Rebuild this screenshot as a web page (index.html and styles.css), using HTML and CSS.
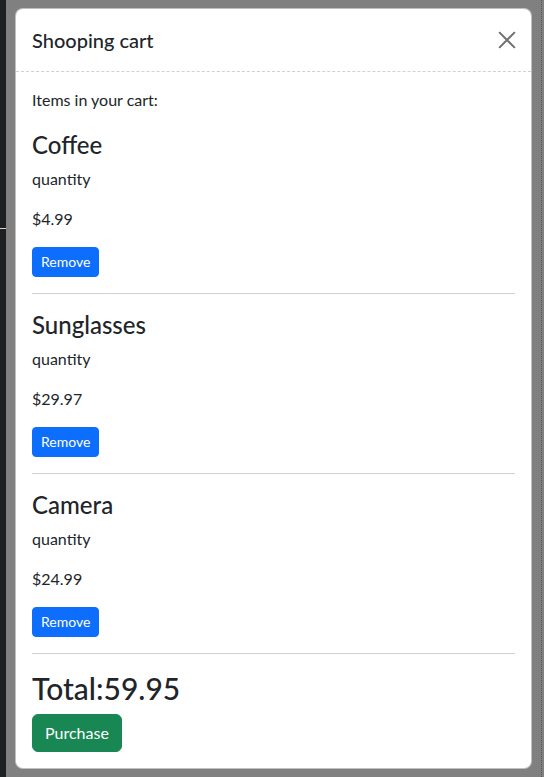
FILE: index.html
```html
<!DOCTYPE html>
<html lang="en">
<head>
<meta charset="utf-8">
<title>Shooping cart</title>
<link rel="stylesheet" href="styles.css">
</head>
<body>
<div class="backdrop">
  <div class="strip"><span class="strip-line"></span></div>
  <div class="dialog-area">
    <div class="modal">
      <div class="modal-header">
        <h5 class="modal-title">Shooping cart</h5>
        <button class="btn-close" aria-label="Close">
          <svg viewBox="0 0 16 16" width="18" height="18"><path d="M1 1 L15 15 M15 1 L1 15" stroke="#707070" stroke-width="1.8" fill="none"/></svg>
        </button>
      </div>
      <div class="modal-body">
        <p class="intro">Items in your cart:</p>
        <div class="item">
          <h3 class="item-name">Coffee</h3>
          <p class="item-qty">quantity</p>
          <p class="item-price">$4.99</p>
          <div><button class="btn btn-primary btn-sm">Remove</button></div>
          <hr class="divider">
        </div>
        <div class="item">
          <h3 class="item-name">Sunglasses</h3>
          <p class="item-qty">quantity</p>
          <p class="item-price">$29.97</p>
          <div><button class="btn btn-primary btn-sm">Remove</button></div>
          <hr class="divider">
        </div>
        <div class="item">
          <h3 class="item-name">Camera</h3>
          <p class="item-qty">quantity</p>
          <p class="item-price">$24.99</p>
          <div><button class="btn btn-primary btn-sm">Remove</button></div>
          <hr class="divider">
        </div>
        <h1 class="total">Total:59.95</h1>
        <button class="btn btn-success">Purchase</button>
      </div>
    </div>
  </div>
  <div class="right-gutter"></div>
</div>
</body>
</html>
```

FILE: styles.css
```css
* { box-sizing: border-box; }
html, body { margin: 0; padding: 0; }
body {
  width: 544px;
  height: 777px;
  overflow: hidden;
  background: #808080;
  font-family: Lato, "Open Sans", sans-serif;
  color: #212529;
}
.backdrop {
  display: flex;
  height: 777px;
}
.strip {
  width: 6px;
  flex: none;
  background: #1e1f21;
  position: relative;
}
.strip-line {
  position: absolute;
  left: 0;
  top: 228px;
  width: 6px;
  height: 1px;
  background: #d8d8d8;
}
.dialog-area {
  flex: none;
  width: 535px;
  padding: 8px 0 0 9px;
}
.right-gutter {
  flex: none;
  width: 3px;
  border-left: 1px dotted #555;
}
.modal {
  width: 517px;
  background: #fff;
  border: 1px solid rgba(0,0,0,0.25);
  border-radius: 8px;
}
.modal-header {
  display: flex;
  align-items: center;
  justify-content: space-between;
  padding: 16px 14px 16px 16px;
  border-bottom: 1px dashed #cfd2d4;
}
.modal-title {
  margin: 0;
  font-size: 20px;
  font-weight: 500;
  line-height: 30px;
}
.btn-close {
  border: 0;
  background: transparent;
  padding: 0;
  width: 20px;
  height: 20px;
  display: flex;
  align-items: center;
  justify-content: center;
}
.modal-body {
  padding: 16px;
}
p { margin: 0 0 16px; font-size: 16px; line-height: 24px; }
.intro { margin-bottom: 18px; }
.item-name {
  margin: 0 0 8px;
  font-size: 24px;
  font-weight: 500;
  line-height: 29px;
}
.divider {
  border: 0;
  border-top: 1px solid #cdd2d0;
  margin: 16px 0;
}
.total {
  margin: 0 0 8px;
  font-size: 30px;
  font-weight: 500;
  line-height: 36px;
}
.btn {
  display: inline-block;
  border: 1px solid transparent;
  border-radius: 6px;
  font-family: inherit;
  color: #fff;
  padding: 6px 12px;
  font-size: 16px;
  line-height: 24px;
}
.btn-sm {
  padding: 4px 8px;
  font-size: 14px;
  line-height: 20px;
  border-radius: 4px;
}
.btn-primary { background: #0d6efd; border-color: #0d6efd; }
.btn-success { background: #198754; border-color: #198754; }
```
